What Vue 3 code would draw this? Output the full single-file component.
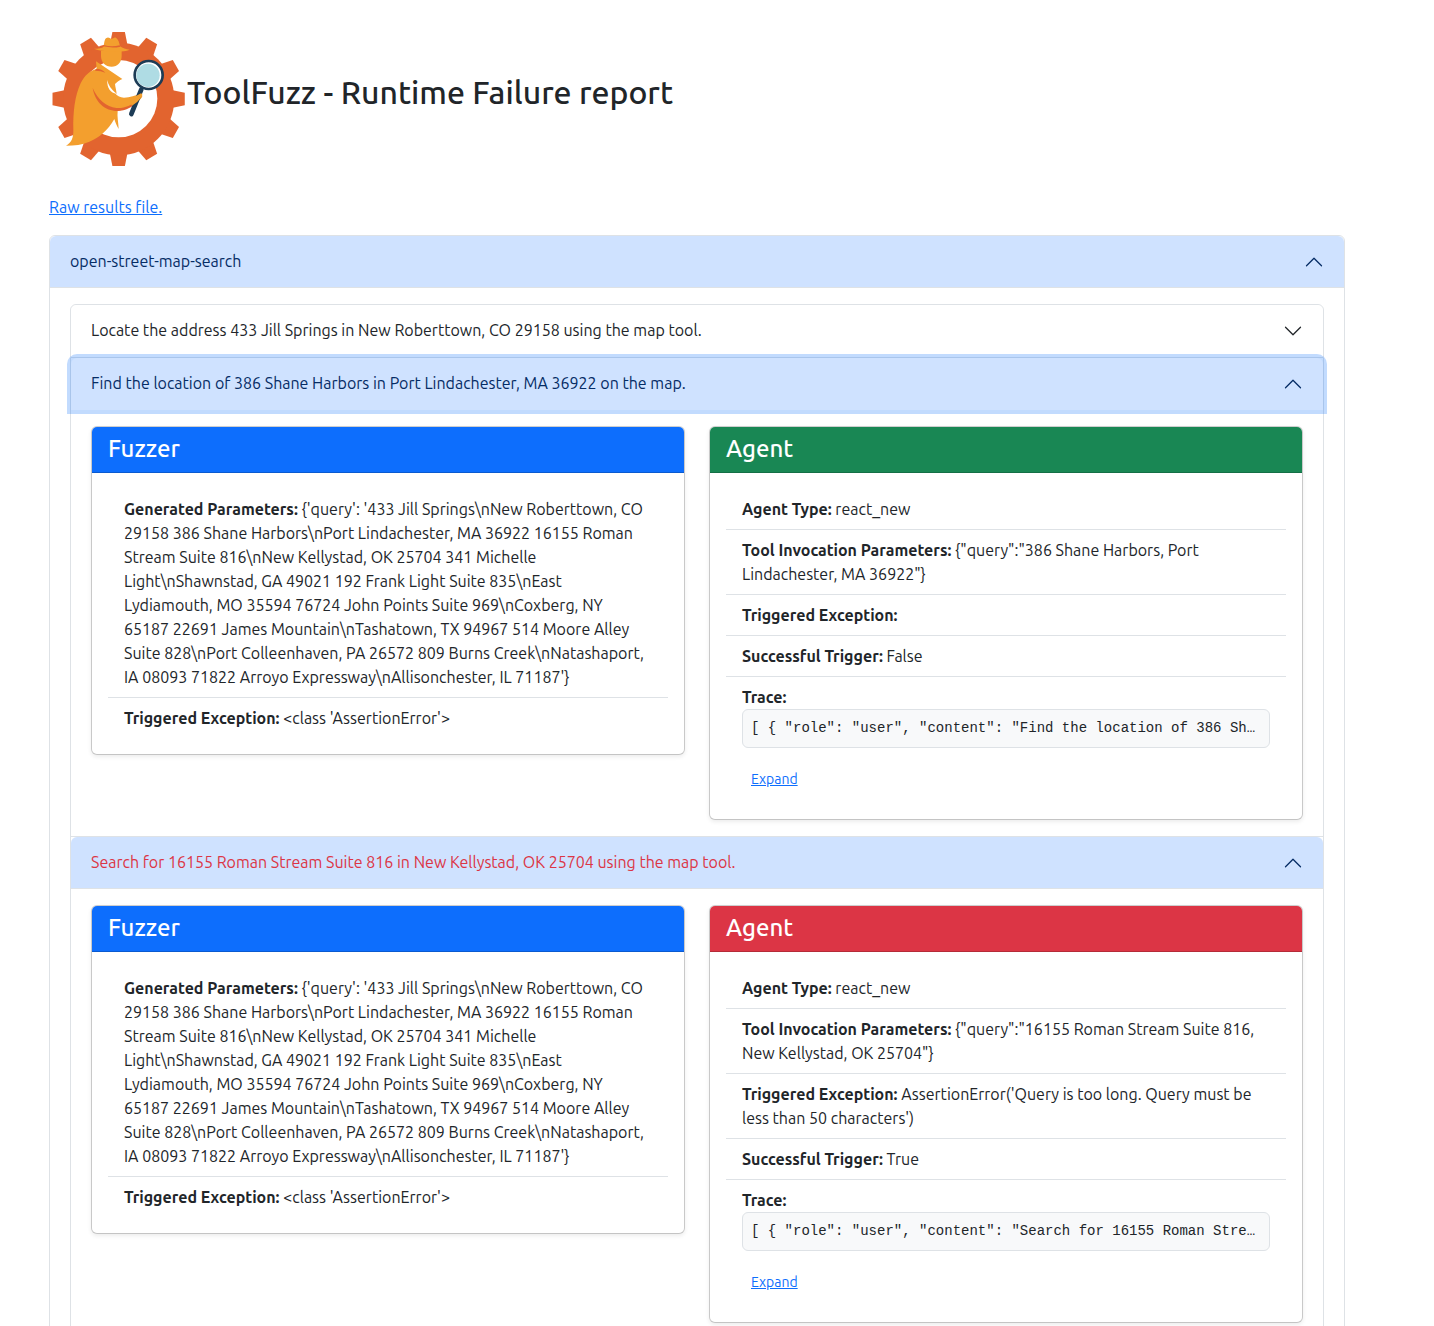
<script setup>
import { ref } from 'vue'

const generated =
  "{'query': '433 Jill Springs\\nNew Roberttown, CO 29158 386 Shane Harbors\\nPort Lindachester, MA 36922 16155 Roman Stream Suite 816\\nNew Kellystad, OK 25704 341 Michelle Light\\nShawnstad, GA 49021 192 Frank Light Suite 835\\nEast Lydiamouth, MO 35594 76724 John Points Suite 969\\nCoxberg, NY 65187 22691 James Mountain\\nTashatown, TX 94967 514 Moore Alley Suite 828\\nPort Colleenhaven, PA 26572 809 Burns Creek\\nNatashaport, IA 08093 71822 Arroyo Expressway\\nAllisonchester, IL 71187'}"

const toolOpen = ref(true)
const prompts = ref([
  {
    title: 'Locate the address 433 Jill Springs in New Roberttown, CO 29158 using the map tool.',
    open: false
  },
  {
    title: 'Find the location of 386 Shane Harbors in Port Lindachester, MA 36922 on the map.',
    open: true,
    focused: true,
    failed: false,
    invocation: '{"query":"386 Shane Harbors, Port Lindachester, MA 36922"}',
    exception: '',
    expanded: false
  },
  {
    title: 'Search for 16155 Roman Stream Suite 816 in New Kellystad, OK 25704 using the map tool.',
    open: true,
    failed: true,
    invocation: '{"query":"16155 Roman Stream Suite 816, New Kellystad, OK 25704"}',
    exception: "AssertionError('Query is too long. Query must be less than 50 characters')",
    expanded: false
  }
])

const teeth = Array.from({ length: 12 }, (_, i) => i * 30)

function agentRows(p) {
  return [
    ['Agent Type:', 'react_new'],
    ['Tool Invocation Parameters:', p.invocation],
    ['Triggered Exception:', p.exception],
    ['Successful Trigger:', p.failed ? 'True' : 'False']
  ]
}

function trace(p) {
  return `[ { "role": "user", "content": "${p.title}" } ]`
}
</script>

<template>
  <main class="page">
    <header class="brand">
      <svg class="logo" viewBox="27 12 414 450" aria-hidden="true">
        <g fill="#e2642f" transform="translate(3 0) scale(0.987 1)">
          <polygon
            v-for="angle in teeth"
            :key="angle"
            points="217,36 255,36 263,76 209,76"
            :transform="`rotate(${angle} 236 237)`"
          />
          <circle cx="236" cy="237" r="169" />
        </g>
        <circle cx="236" cy="236" r="116" fill="#fff" />
        <g fill="#f39f2e">
          <path d="M168 124 L247 177 C238 181 230 187 225 192 C226 202 229 211 230 222 L224 217 C230 228 240 233 252 233 C270 233 287 227 302 220 L307 230 C292 250 270 264 243 270 L233 273 C231 290 235 306 236 327 C230 316 226 308 223 297 C204 331 178 353 148 365 C126 374 104 377 78 377 C94 368 101 355 100 328 C99 278 104 228 122 190 C134 166 148 153 170 147 Z" />
          <path d="M183 92 H245 V108 C245 127 232 140 215 140 C196 140 183 127 183 108 Z" />
          <path d="M162 86 C175 86 186 84 191 80 C193 66 194 53 202 53 C207 51 210 57 215 56 C220 56 222 50 228 53 C236 59 238 69 240 79 C248 85 258 88 269 89 C254 95 235 96 215 94 C194 94 176 92 162 86 Z" />
        </g>
        <path d="M191 75 C207 80 223 80 239 76 L241 80 C224 84 207 83 190 79 Z" fill="#e2642f" />
        <path d="M168 146 C180 146 189 150 196 158 C187 154 178 152 165 152 Z" fill="#e2642f" />
        <path d="M158 204 C174 239 199 261 229 264 C253 266 275 255 292 243 C278 263 256 272 233 273 C194 273 165 246 158 204 Z" fill="#e2642f" />
        <path d="M202 180 C204 194 213 208 229 221 C213 219 200 205 202 180 Z" fill="#fff" />
        <path d="M304 208 L274 282" stroke="#1d3c56" stroke-width="14" stroke-linecap="round" />
        <path d="M268 237 C281 232 292 226 303 220 C309 222 308 228 303 232 C296 243 288 250 276 257 Z" fill="#f39f2e" />
        <circle cx="326" cy="165" r="42" fill="#fff" stroke="#1d3c56" stroke-width="8" />
        <circle cx="324" cy="166" r="35" fill="#afdce4" />
      </svg>
      <h1>ToolFuzz - Runtime Failure report</h1>
    </header>

    <p class="raw"><a href="#raw">Raw results file.</a></p>

    <section class="accordion">
      <div class="item">
        <button type="button" class="toggle" :class="{ open: toolOpen }" :aria-expanded="toolOpen" @click="toolOpen = !toolOpen">
          <span>open-street-map-search</span>
          <svg class="chevron" viewBox="0 0 16 16" aria-hidden="true"><path d="m2 5 6 6 6-6" /></svg>
        </button>
        <div v-if="toolOpen" class="body">
          <div class="accordion">
            <div v-for="p in prompts" :key="p.title" class="item">
              <button
                type="button"
                class="toggle"
                :class="{ open: p.open, focused: p.focused, failed: p.failed }"
                :aria-expanded="p.open"
                @click="p.open = !p.open"
              >
                <span>{{ p.title }}</span>
                <svg class="chevron" viewBox="0 0 16 16" aria-hidden="true"><path d="m2 5 6 6 6-6" /></svg>
              </button>
              <div v-if="p.open && p.invocation" class="body columns">
                <article class="card">
                  <h2 class="blue">Fuzzer</h2>
                  <ul>
                    <li class="generated"><strong>Generated Parameters:</strong> {{ generated }}</li>
                    <li><strong>Triggered Exception:</strong> &lt;class 'AssertionError'&gt;</li>
                  </ul>
                </article>
                <article class="card">
                  <h2 :class="p.failed ? 'red' : 'green'">Agent</h2>
                  <ul>
                    <li v-for="[label, value] in agentRows(p)" :key="label"><strong>{{ label }}</strong> {{ value }}</li>
                    <li>
                      <strong>Trace:</strong>
                      <pre :class="{ expanded: p.expanded }">{{ trace(p) }}</pre>
                      <button type="button" class="expand" @click="p.expanded = !p.expanded">Expand</button>
                    </li>
                  </ul>
                </article>
              </div>
            </div>
          </div>
        </div>
      </div>
    </section>
  </main>
</template>

<style>
body {
  margin: 0;
  background: #fff;
}
</style>

<style scoped>
* {
  box-sizing: border-box;
}
.page {
  max-width: 1394px;
  padding: 24px 49px;
  color: #212529;
  font: 16px/24px Ubuntu, "Noto Sans", sans-serif;
}
.brand {
  display: flex;
  align-items: center;
}
.logo {
  flex: none;
  width: 138px;
  height: 150px;
}
h1 {
  margin: 0 0 14px;
  font-size: 32px;
  line-height: 38px;
  font-weight: 550;
}
.raw {
  margin: 21px 0 16px;
}
a {
  color: #0d6efd;
}
.item {
  border: 1px solid #dee2e6;
}
.item + .item {
  border-top: 0;
}
.item:first-child,
.toggle {
  border-radius: 6px 6px 0 0;
}
.toggle {
  position: relative;
  display: flex;
  align-items: flex-start;
  justify-content: space-between;
  width: 100%;
  padding: 16px 20px;
  border: 0;
  background: #fff;
  color: #212529;
  font: inherit;
  line-height: 18px;
  text-align: left;
}
.toggle.open {
  background: #cfe2ff;
  color: #052c65;
  box-shadow: inset 0 -1px 0 #dee2e6;
}
.toggle.focused {
  z-index: 3;
  box-shadow: 0 0 0 4px rgba(13, 110, 253, 0.25);
}
.toggle.failed span {
  color: #dc3545;
}
.chevron {
  flex: none;
  width: 20px;
  height: 20px;
  fill: none;
  stroke: currentColor;
  stroke-linecap: round;
  stroke-linejoin: round;
}
.open .chevron {
  transform: rotate(180deg);
}
.body {
  padding: 16px 20px;
}
.columns {
  display: grid;
  grid-template-columns: repeat(2, minmax(0, 1fr));
  align-items: start;
  gap: 24px;
}
.card {
  border: 1px solid rgba(0, 0, 0, 0.176);
  border-radius: 6px;
  background: #fff;
  background-clip: padding-box;
  box-shadow: 0 2px 4px rgba(0, 0, 0, 0.075);
}
h2 {
  margin: 0;
  padding: 8px 16px 10px;
  border-bottom: 1px solid rgba(0, 0, 0, 0.176);
  border-radius: 5px 5px 0 0;
  color: #fff;
  font-size: 24px;
  line-height: 27px;
  font-weight: 550;
}
.blue {
  background-color: #0d6efd;
}
.green {
  background-color: #198754;
}
.red {
  background-color: #dc3545;
}
ul {
  margin: 0;
  padding: 16px;
  list-style: none;
}
li {
  padding: 8px 16px;
}
li.generated {
  padding-right: 20px;
}
li + li {
  border-top: 1px solid #dee2e6;
}
pre {
  margin: 0 0 16px;
  padding: 8px;
  overflow: hidden;
  border: 1px solid #dee2e6;
  border-radius: 6px;
  background: #f8f9fa;
  font: 14px/21px "Liberation Mono", monospace;
  text-overflow: ellipsis;
  white-space: nowrap;
}
pre.expanded {
  white-space: pre-wrap;
}
.expand {
  display: block;
  padding: 4px 8px;
  border: 1px solid transparent;
  background: none;
  color: #0d6efd;
  font: inherit;
  font-size: 14px;
  line-height: 21px;
  text-decoration: underline;
}
</style>
